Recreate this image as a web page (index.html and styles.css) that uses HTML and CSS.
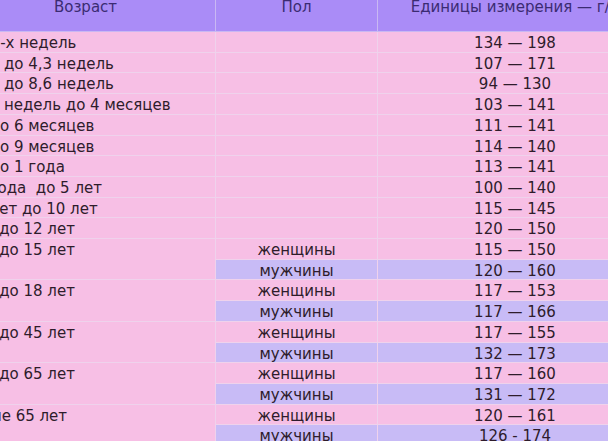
FILE: index.html
```html
<!DOCTYPE html>
<html lang="ru">
<head>
<meta charset="utf-8">
<title>Нормы гемоглобина</title>
<link rel="stylesheet" href="styles.css">
</head>
<body>
<table class="norms">
  <colgroup>
    <col class="c-age">
    <col class="c-sex">
    <col class="c-val">
  </colgroup>
  <thead>
    <tr>
      <th class="h-age">Возраст</th>
      <th>Пол</th>
      <th>Единицы измерения — г/л</th>
    </tr>
  </thead>
  <tbody>
    <tr><td class="age first">До 2-х недель</td><td></td><td>134 — 198</td></tr>
    <tr><td class="age">От 2-х до 4,3 недель</td><td></td><td>107 — 171</td></tr>
    <tr><td class="age">От 4,3 до 8,6 недель</td><td></td><td>94 — 130</td></tr>
    <tr><td class="age">От 8,6 недель до 4 месяцев</td><td></td><td>103 — 141</td></tr>
    <tr><td class="age">От 4 до 6 месяцев</td><td></td><td>111 — 141</td></tr>
    <tr><td class="age">От 6 до 9 месяцев</td><td></td><td>114 — 140</td></tr>
    <tr><td class="age">От 9 до 1 года</td><td></td><td>113 — 141</td></tr>
    <tr><td class="age">От 1 года&nbsp; до 5 лет</td><td></td><td>100 — 140</td></tr>
    <tr><td class="age">От 5 лет до 10 лет</td><td></td><td>115 — 145</td></tr>
    <tr><td class="age">От 10 до 12 лет</td><td></td><td>120 — 150</td></tr>
    <tr><td class="age" rowspan="2">От 12 до 15 лет</td><td>женщины</td><td>115 — 150</td></tr>
    <tr class="male"><td>мужчины</td><td>120 — 160</td></tr>
    <tr><td class="age" rowspan="2">От 15 до 18 лет</td><td>женщины</td><td>117 — 153</td></tr>
    <tr class="male"><td>мужчины</td><td>117 — 166</td></tr>
    <tr><td class="age" rowspan="2">От 18 до 45 лет</td><td>женщины</td><td>117 — 155</td></tr>
    <tr class="male"><td>мужчины</td><td>132 — 173</td></tr>
    <tr><td class="age" rowspan="2">От 45 до 65 лет</td><td>женщины</td><td>117 — 160</td></tr>
    <tr class="male"><td>мужчины</td><td>131 — 172</td></tr>
    <tr><td class="age" rowspan="2">Старше 65 лет</td><td>женщины</td><td>120 — 161</td></tr>
    <tr class="male"><td>мужчины</td><td>126 - 174</td></tr>
  </tbody>
</table>
</body>
</html>
```

FILE: styles.css
```css
html, body {
  margin: 0;
  padding: 0;
  background: #f7bfe5;
  overflow: hidden;
}

.norms {
  border-collapse: collapse;
  table-layout: fixed;
  width: 712px;
  margin: -7px 0 0 -60px;
  font-family: "DejaVu Sans", Verdana, sans-serif;
  font-size: 15px;
  color: #2e1c2b;
}

.c-age { width: 275px; }
.c-sex { width: 162px; }
.c-val { width: 275px; }

.norms th,
.norms td {
  border: 1px solid #efd2ec;
  padding: 0;
  font-weight: normal;
  text-align: center;
  vertical-align: top;
  white-space: nowrap;
  overflow: hidden;
}

.norms th {
  background: #aa8cf7;
  color: #3b2b72;
  line-height: 18px;
  padding: 5px 0 15px;
  border-top: none;
  border-color: #c9b8f3;
}

.norms th.h-age {
  padding-left: 15px;
}

.norms td {
  background: #f7bfe5;
  line-height: 16.7px;
  padding-top: 3px;
}

.norms td.age {
  text-align: left;
  padding-left: 9px;
}

.norms td.first {
  padding-left: 24px;
}

.norms tr.male td {
  background: #c8bbf6;
}
```
